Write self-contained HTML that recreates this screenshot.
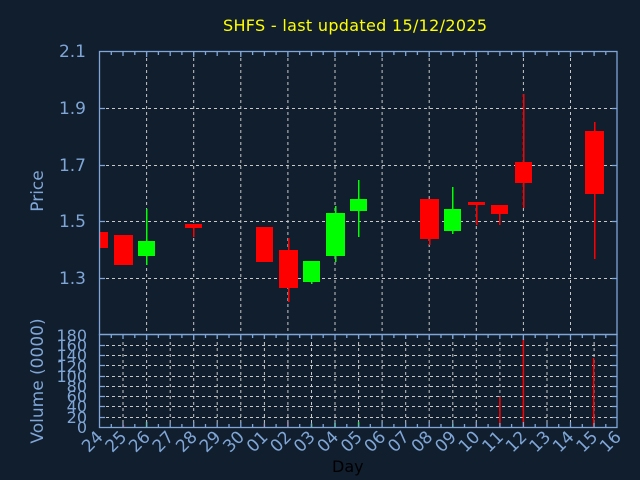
<!DOCTYPE html>
<html><head><style>
html,body{margin:0;padding:0;background:#111e2e;}
svg{display:block;}
text{font-family:"DejaVu Sans","Liberation Sans",sans-serif;}
</style></head><body>
<svg width="640" height="480" xmlns="http://www.w3.org/2000/svg">
<rect width="640" height="480" fill="#111e2e"/>
<text x="355" y="31" font-size="16" fill="#ffff00" text-anchor="middle" textLength="264">SHFS - last updated 15/12/2025</text>

<!-- price grid -->
<g stroke="#c8c8c8" stroke-width="1" stroke-dasharray="3,3" fill="none">
<path d="M146.6 52V334M193.7 52V334M240.8 52V334M287.9 52V334M335 52V334M382.1 52V334M429.2 52V334M476.3 52V334M523.4 52V334M570.5 52V334"/>
<path d="M100 108.5H616M100 165.5H616M100 221.5H616M100 278.5H616"/>
</g>
<!-- volume grid -->
<g stroke="#c8c8c8" stroke-width="1" stroke-dasharray="3,3" fill="none">
<path d="M123 336V426M146.6 336V426M170.2 336V426M193.7 336V426M217.2 336V426M240.8 336V426M264.4 336V426M287.9 336V426M311.5 336V426M335 336V426M358.6 336V426M382.1 336V426M405.7 336V426M429.2 336V426M452.8 336V426M476.3 336V426M499.9 336V426M523.4 336V426M547 336V426M570.5 336V426M594.1 336V426"/>
<path d="M100 345.5H616M100 355.5H616M100 365.5H616M100 376.5H616M100 386.5H616M100 396.5H616M100 406.5H616M100 417.5H616"/>
</g>

<!-- candles -->
<g fill="#ff0000" stroke="none">
<rect x="99" y="232" width="9" height="16"/>
<rect x="114" y="235" width="19" height="30"/>
<rect x="185" y="224" width="17" height="4"/><rect x="193" y="224" width="1.5" height="13"/>
<rect x="256" y="227" width="17" height="35"/>
<rect x="279" y="250" width="19" height="38"/><rect x="288" y="238" width="1.5" height="64"/>
<rect x="420" y="199" width="19" height="40"/><rect x="429" y="199" width="1.5" height="46"/>
<rect x="468" y="202" width="17" height="3"/><rect x="476" y="202" width="1.5" height="23"/>
<rect x="491" y="205" width="17" height="9"/><rect x="499" y="205" width="1.5" height="20"/>
<rect x="515" y="162" width="17" height="21"/><rect x="523" y="94" width="1.5" height="114"/>
<rect x="585" y="131" width="19" height="63"/><rect x="594" y="122" width="1.5" height="137"/>
</g>
<g fill="#00ff00" stroke="none">
<rect x="146" y="209" width="1.5" height="56"/><rect x="138" y="241" width="17" height="15"/>
<rect x="311" y="261" width="1.5" height="23"/><rect x="303" y="261" width="17" height="21"/>
<rect x="335" y="206" width="1.5" height="56"/><rect x="326" y="213" width="19" height="43"/>
<rect x="358" y="180" width="1.5" height="57"/><rect x="350" y="199" width="17" height="12"/>
<rect x="452" y="187" width="1.5" height="47"/><rect x="444" y="209" width="17" height="22"/>
</g>

<!-- volume bars -->
<g stroke-width="1.5">
<path d="M123.5 425V427M193.7 425V427M264.4 424V427M287.9 422V427M429.2 425V427M476.3 424V427M499.9 397V427M523.4 339V427M593.6 358V427" stroke="#ff0000"/>
<path d="M146.6 422V427M311.5 424V427M335 423V427M358.6 422V427M452.8 424V427" stroke="#00ff00"/>
</g>

<!-- axes -->
<g stroke="#7fa6d6" stroke-width="1.3" fill="none">
<rect x="99.5" y="51.5" width="517.5" height="283"/>
<rect x="99.5" y="334.5" width="517.5" height="93"/>
<path d="M111.3 52v3M123 52v4M134.8 52v3M146.6 52v5M158.4 52v3M170.2 52v4M181.9 52v3M193.7 52v5M205.5 52v3M217.2 52v4M229 52v3M240.8 52v5M252.6 52v3M264.4 52v4M276.1 52v3M287.9 52v5M299.7 52v3M311.5 52v4M323.2 52v3M335 52v5M346.8 52v3M358.6 52v4M370.3 52v3M382.1 52v5M393.9 52v3M405.7 52v4M417.4 52v3M429.2 52v5M441 52v3M452.8 52v4M464.5 52v3M476.3 52v5M488.1 52v3M499.9 52v4M511.6 52v3M523.4 52v5M535.2 52v3M547 52v4M558.7 52v3M570.5 52v5M582.3 52v3M594.1 52v4M605.8 52v3"/>
<path d="M111.3 335v3M123 335v4M134.8 335v3M146.6 335v5M158.4 335v3M170.2 335v4M181.9 335v3M193.7 335v5M205.5 335v3M217.2 335v4M229 335v3M240.8 335v5M252.6 335v3M264.4 335v4M276.1 335v3M287.9 335v5M299.7 335v3M311.5 335v4M323.2 335v3M335 335v5M346.8 335v3M358.6 335v4M370.3 335v3M382.1 335v5M393.9 335v3M405.7 335v4M417.4 335v3M429.2 335v5M441 335v3M452.8 335v4M464.5 335v3M476.3 335v5M488.1 335v3M499.9 335v4M511.6 335v3M523.4 335v5M535.2 335v3M547 335v4M558.7 335v3M570.5 335v5M582.3 335v3M594.1 335v4M605.8 335v3"/>
<path d="M111.3 427v-3M123 427v-4M134.8 427v-3M146.6 427v-5M158.4 427v-3M170.2 427v-4M181.9 427v-3M193.7 427v-5M205.5 427v-3M217.2 427v-4M229 427v-3M240.8 427v-5M252.6 427v-3M264.4 427v-4M276.1 427v-3M287.9 427v-5M299.7 427v-3M311.5 427v-4M323.2 427v-3M335 427v-5M346.8 427v-3M358.6 427v-4M370.3 427v-3M382.1 427v-5M393.9 427v-3M405.7 427v-4M417.4 427v-3M429.2 427v-5M441 427v-3M452.8 427v-4M464.5 427v-3M476.3 427v-5M488.1 427v-3M499.9 427v-4M511.6 427v-3M523.4 427v-5M535.2 427v-3M547 427v-4M558.7 427v-3M570.5 427v-5M582.3 427v-3M594.1 427v-4M605.8 427v-3"/>
<path d="M100 108.5h5M100 165.5h5M100 221.5h5M100 278.5h5M617 108.5h-5M617 165.5h-5M617 221.5h-5M617 278.5h-5"/>
<path d="M100 345.5h5M100 355.5h5M100 365.5h5M100 376.5h5M100 386.5h5M100 396.5h5M100 406.5h5M100 417.5h5M617 345.5h-5M617 355.5h-5M617 365.5h-5M617 376.5h-5M617 386.5h-5M617 396.5h-5M617 406.5h-5M617 417.5h-5"/>
</g>

<!-- y labels -->
<g fill="#7fa6d6" font-size="17" text-anchor="end">
<text x="86" y="57">2.1</text>
<text x="86" y="114">1.9</text>
<text x="86" y="171">1.7</text>
<text x="86" y="227">1.5</text>
<text x="86" y="284">1.3</text>
</g>
<g fill="#7fa6d6" font-size="16" text-anchor="end">
<text x="87" y="341">180</text>
<text x="87" y="351">160</text>
<text x="87" y="361">140</text>
<text x="87" y="372">120</text>
<text x="87" y="382">100</text>
<text x="87" y="392">80</text>
<text x="87" y="402">60</text>
<text x="87" y="412">40</text>
<text x="87" y="423">20</text>
<text x="87" y="433">0</text>
</g>
<text transform="translate(43,191) rotate(-90)" fill="#7fa6d6" font-size="17" text-anchor="middle">Price</text>
<text transform="translate(43,381) rotate(-90)" fill="#7fa6d6" font-size="17" text-anchor="middle">Volume (0000)</text>

<!-- x labels -->
<g fill="#7fa6d6" font-size="17" text-anchor="end">
<text transform="translate(104,438) rotate(-45)">24</text>
<text transform="translate(127.6,438) rotate(-45)">25</text>
<text transform="translate(151.1,438) rotate(-45)">26</text>
<text transform="translate(174.7,438) rotate(-45)">27</text>
<text transform="translate(198.2,438) rotate(-45)">28</text>
<text transform="translate(221.8,438) rotate(-45)">29</text>
<text transform="translate(245.3,438) rotate(-45)">30</text>
<text transform="translate(268.9,438) rotate(-45)">01</text>
<text transform="translate(292.4,438) rotate(-45)">02</text>
<text transform="translate(316,438) rotate(-45)">03</text>
<text transform="translate(339.5,438) rotate(-45)">04</text>
<text transform="translate(363.1,438) rotate(-45)">05</text>
<text transform="translate(386.6,438) rotate(-45)">06</text>
<text transform="translate(410.2,438) rotate(-45)">07</text>
<text transform="translate(433.7,438) rotate(-45)">08</text>
<text transform="translate(457.3,438) rotate(-45)">09</text>
<text transform="translate(480.8,438) rotate(-45)">10</text>
<text transform="translate(504.4,438) rotate(-45)">11</text>
<text transform="translate(527.9,438) rotate(-45)">12</text>
<text transform="translate(551.5,438) rotate(-45)">13</text>
<text transform="translate(575,438) rotate(-45)">14</text>
<text transform="translate(598.6,438) rotate(-45)">15</text>
<text transform="translate(622.1,438) rotate(-45)">16</text>
</g>
<text x="332" y="472" fill="#000000" font-size="16">Day</text>
</svg>
</body></html>
